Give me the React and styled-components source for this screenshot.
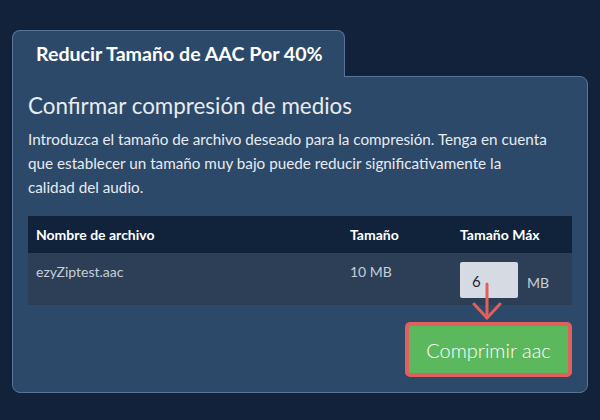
import styled, { createGlobalStyle } from "styled-components";

const COLORS = {
  page: "#11223a",
  panel: "#2c4969",
  border: "#5b7394",
  head: "#10233a",
  row: "#2d3f56",
  text: "#e8ebef",
  muted: "#c8ced8",
  green: "#5cb85c",
  red: "#df605c",
};

const GlobalStyle = createGlobalStyle`
  html, body {
    margin: 0;
    background: ${COLORS.page};
    font-family: Lato, "Noto Sans", sans-serif;
  }
`;

const Wrapper = styled.div`
  padding: 30px 12px 0 12px;
  width: 576px;
`;

const Tab = styled.div`
  display: inline-block;
  position: relative;
  z-index: 1;
  margin-bottom: -1px;
  padding: 0 23px;
  width: 333px;
  box-sizing: border-box;
  height: 47px;
  line-height: 46px;
  white-space: nowrap;
  background: ${COLORS.panel};
  border: 1px solid ${COLORS.border};
  border-bottom: none;
  border-radius: 8px 8px 0 0;
  color: #ffffff;
  font-weight: 700;
  font-size: 19.6px;
`;

const Panel = styled.div`
  background: ${COLORS.panel};
  border: 1px solid ${COLORS.border};
  border-radius: 0 8px 8px 8px;
  padding: 16px 15px 15px 15px;
`;

const Heading = styled.h2`
  margin: 0 0 8px 0;
  font-size: 22.4px;
  font-weight: 400;
  line-height: 26px;
  color: ${COLORS.text};
`;

const Intro = styled.p`
  margin: 0 0 17px 0;
  font-size: 15.25px;
  line-height: 24px;
  color: ${COLORS.text};
`;

const Row = styled.div`
  display: grid;
  grid-template-columns: 314px 110px 1fr;
  padding: 0 8px;
  background: ${(p) => (p.$head ? COLORS.head : COLORS.row)};
  height: ${(p) => (p.$head ? "37px" : "52px")};
  align-items: ${(p) => (p.$head ? "center" : "start")};
  font-size: 14px;
  font-weight: ${(p) => (p.$head ? 700 : 400)};
  color: ${(p) => (p.$head ? "#ffffff" : COLORS.muted)};
`;

const Cell = styled.div`
  padding-top: ${(p) => (p.$top ? "10px" : "0")};
`;

const SizeCell = styled.div`
  position: relative;
  display: flex;
  align-items: center;
  gap: 9px;
  padding-top: 9px;
`;

const SizeInput = styled.div`
  width: 58px;
  height: 36px;
  box-sizing: border-box;
  padding-left: 12px;
  background: #d6dbe3;
  border-radius: 2px;
  color: #1d2430;
  font-size: 15px;
  line-height: 38px;
`;

const Unit = styled.span`
  font-size: 14px;
  color: ${COLORS.muted};
  padding-top: 4px;
`;

const Arrow = styled.svg`
  position: absolute;
  left: 12px;
  top: 31px;
  overflow: visible;
`;

const Actions = styled.div`
  display: flex;
  justify-content: flex-end;
  margin-top: 17px;
`;

const Button = styled.button`
  width: 167px;
  height: 55px;
  border: 4px solid ${COLORS.red};
  border-radius: 5px;
  background: ${COLORS.green};
  color: #ffffff;
  font-family: Lato, "Noto Sans", sans-serif;
  font-size: 20px;
  font-weight: 300;
  padding: 0;
`;

const App = () => {
  return (
    <>
      <GlobalStyle />
      <Wrapper>
        <Tab>Reducir Tamaño de AAC Por 40%</Tab>
        <Panel>
          <Heading>Confirmar compresión de medios</Heading>
          <Intro>
            Introduzca el tamaño de archivo deseado para la compresión. Tenga en
            cuenta
            <br />
            que establecer un tamaño muy bajo puede reducir significativamente
            la
            <br />
            calidad del audio.
          </Intro>
          <div>
            <Row $head>
              <Cell>Nombre de archivo</Cell>
              <Cell>Tamaño</Cell>
              <Cell>Tamaño Máx</Cell>
            </Row>
            <Row>
              <Cell $top>ezyZiptest.aac</Cell>
              <Cell $top>10 MB</Cell>
              <SizeCell>
                <SizeInput>6</SizeInput>
                <Unit>MB</Unit>
                <Arrow width="30" height="36" viewBox="0 0 30 36">
                  <g
                    stroke={COLORS.red}
                    strokeWidth="3"
                    fill="none"
                    strokeLinecap="round"
                    strokeLinejoin="round"
                  >
                    <line x1="15" y1="0" x2="15" y2="34" />
                    <polyline points="2,20 15,34 28,20" />
                  </g>
                </Arrow>
              </SizeCell>
            </Row>
          </div>
          <Actions>
            <Button>Comprimir aac</Button>
          </Actions>
        </Panel>
      </Wrapper>
    </>
  );
};

export default App;
